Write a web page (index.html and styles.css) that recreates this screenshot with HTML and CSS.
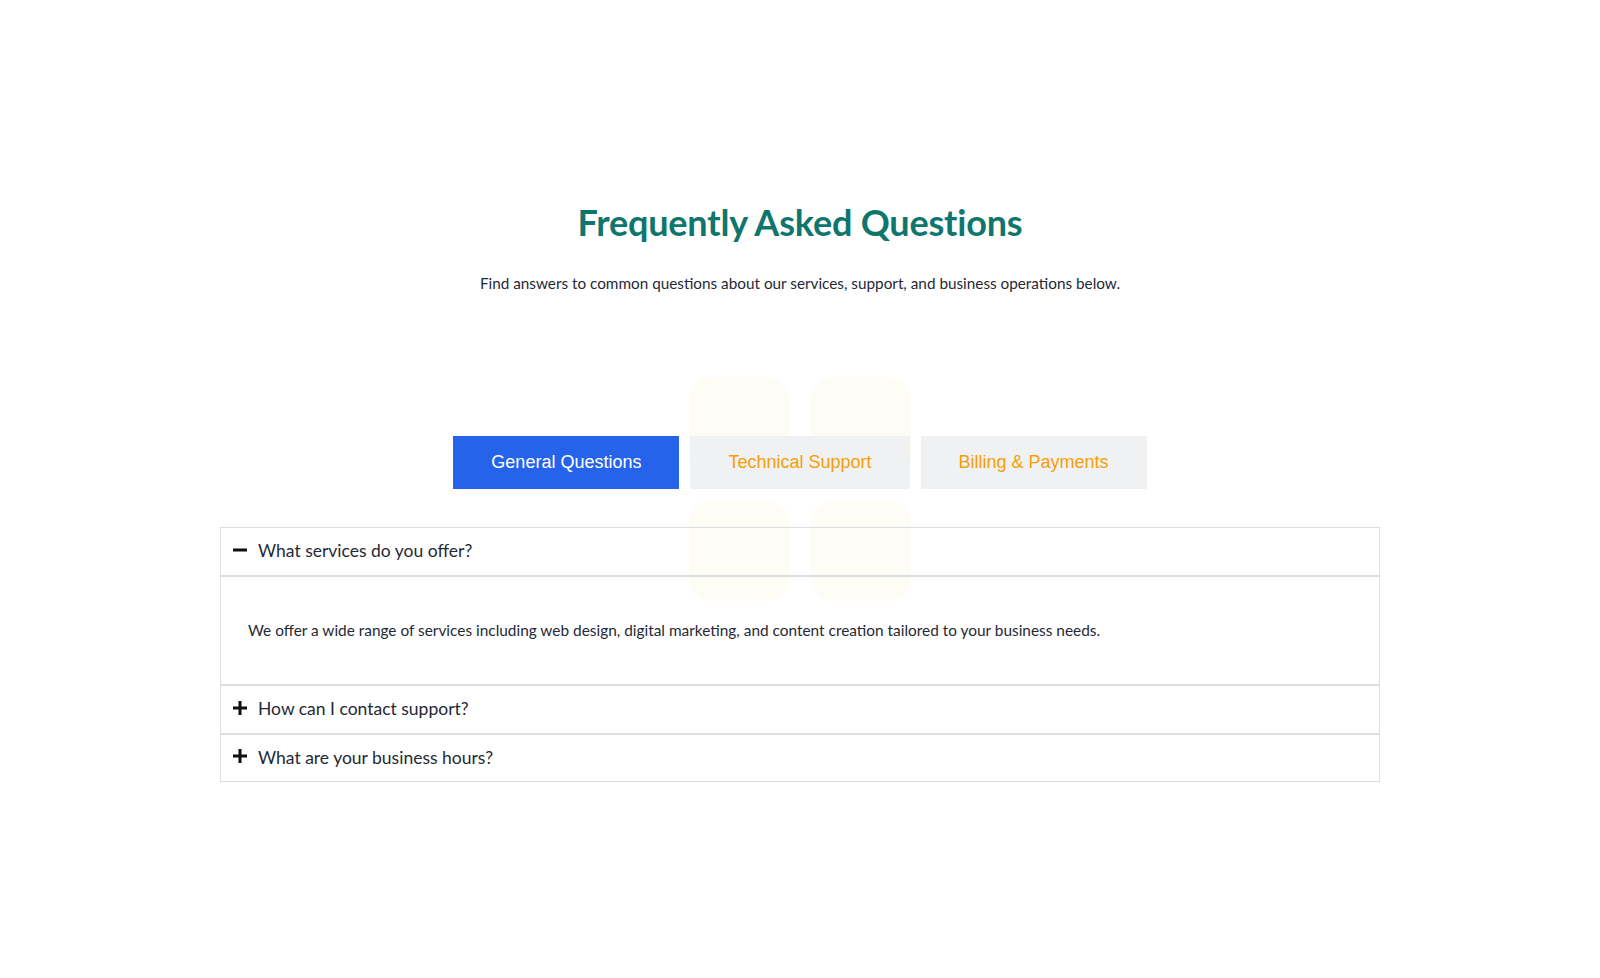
FILE: index.html
```html
<!DOCTYPE html>
<html lang="en">
<head>
<meta charset="utf-8">
<title>Frequently Asked Questions</title>
<link rel="stylesheet" href="styles.css">
</head>
<body>
<section class="faq">
  <header class="faq-head">
    <h1 class="faq-title">Frequently Asked Questions</h1>
    <p class="faq-sub">Find answers to common questions about our services, support, and business operations below.</p>
  </header>

  <div class="tabs-wrap">
    <div class="decor" aria-hidden="true">
      <span class="sq"></span><span class="sq"></span>
      <span class="sq"></span><span class="sq"></span>
    </div>
    <nav class="tabs">
      <button class="tab tab-active">General Questions</button>
      <button class="tab">Technical Support</button>
      <button class="tab">Billing &amp; Payments</button>
    </nav>
  </div>

  <div class="accordion">
    <div class="item open">
      <div class="q">
        <svg class="ic" width="14" height="14" viewBox="0 0 14 14"><rect x="0" y="5.5" width="14" height="3" fill="#111"/></svg>
        <span>What services do you offer?</span>
      </div>
      <div class="a">We offer a wide range of services including web design, digital marketing, and content creation tailored to your business needs.</div>
    </div>
    <div class="item">
      <div class="q">
        <svg class="ic" width="14" height="14" viewBox="0 0 14 14"><rect x="0" y="5.5" width="14" height="3" fill="#111"/><rect x="5.5" y="0" width="3" height="14" fill="#111"/></svg>
        <span>How can I contact support?</span>
      </div>
    </div>
    <div class="item">
      <div class="q">
        <svg class="ic" width="14" height="14" viewBox="0 0 14 14"><rect x="0" y="5.5" width="14" height="3" fill="#111"/><rect x="5.5" y="0" width="3" height="14" fill="#111"/></svg>
        <span>What are your business hours?</span>
      </div>
    </div>
  </div>
</section>
</body>
</html>
```

FILE: styles.css
```css
* { box-sizing: border-box; }

html, body {
  margin: 0;
  padding: 0;
  background: #ffffff;
}

body {
  font-family: Lato, "Noto Sans", sans-serif;
  color: #1f2937;
}

.faq {
  width: 1160px;
  margin: 0 auto;
  padding-top: 200px;
}

.faq-head {
  text-align: center;
}

.faq-title {
  margin: 0;
  font-size: 36px;
  line-height: 44px;
  font-weight: 700;
  color: #0f766e;
  letter-spacing: -0.2px;
}

.faq-sub {
  margin: 27px 0 0;
  font-size: 15.3px;
  line-height: 24px;
  color: #1f2937;
}

.tabs-wrap {
  position: relative;
  margin-top: 141px;
}

.decor {
  position: absolute;
  left: 469px;
  top: -59px;
  display: grid;
  grid-template-columns: 100px 100px;
  grid-auto-rows: 100px;
  gap: 24px 22px;
  z-index: 0;
  pointer-events: none;
}

.sq {
  background: #fdfcf5;
  border-radius: 22px;
}

.tabs {
  position: relative;
  z-index: 1;
  display: flex;
  justify-content: center;
  gap: 11px;
}

.tab {
  border: 0;
  margin: 0;
  padding: 16px 38px;
  font-family: "Liberation Sans", Arial, sans-serif;
  font-size: 18px;
  line-height: 21px;
  background: #f0f1f3;
  color: #f59e0b;
  cursor: pointer;
}

.tab-active {
  background: #2563eb;
  color: #ffffff;
}

.accordion {
  position: relative;
  margin-top: 38px;
  z-index: 0;
}

.q {
  display: flex;
  align-items: center;
  gap: 11px;
  padding: 12px 12px;
  border: 1px solid #dcdee2;
  font-size: 17.5px;
  line-height: 22.8px;
  color: #1f2937;
}

.ic {
  flex: none;
  margin-top: -3px;
}

.a {
  border: 1px solid #dcdee2;
  padding: 42px 27px;
  font-size: 15.4px;
  line-height: 23px;
  color: #1f2937;
}
```
